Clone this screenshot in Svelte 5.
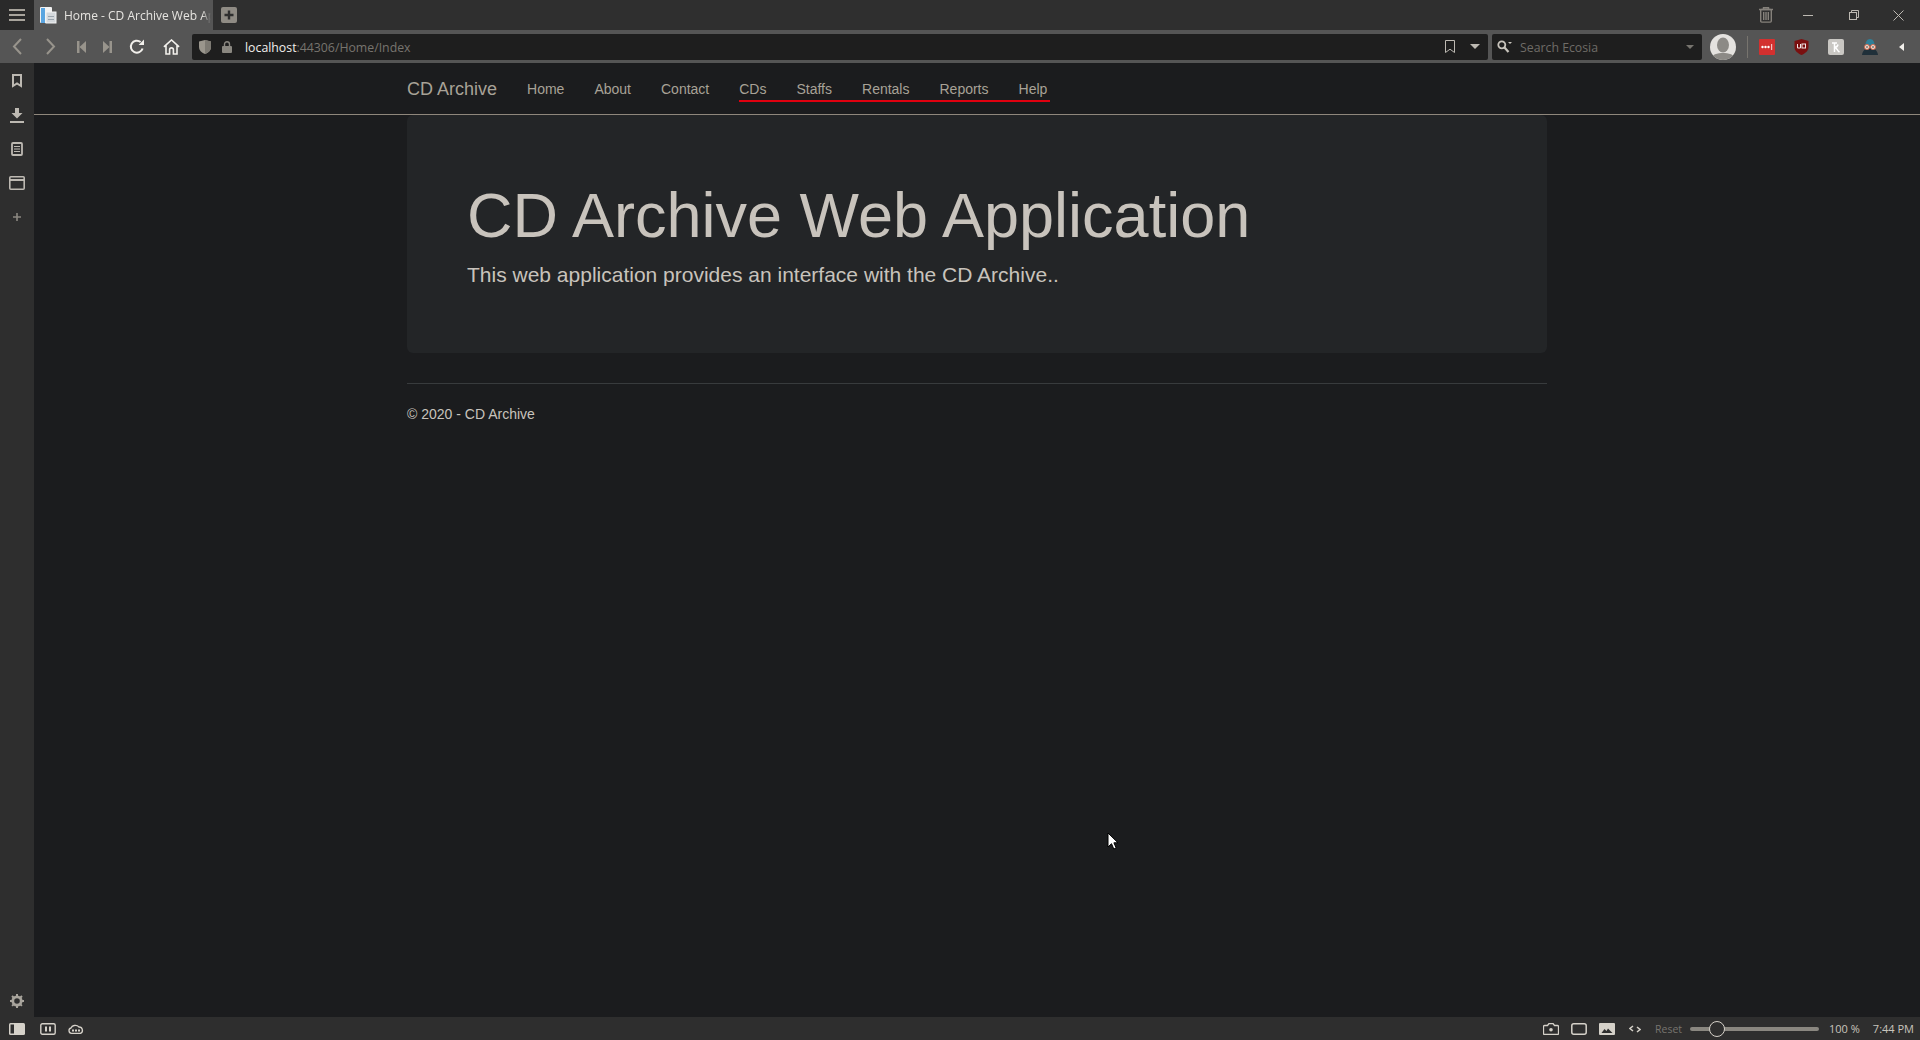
<script lang="ts">
    const navLinks = ["Home", "About", "Contact"];
    const markedLinks = ["CDs", "Staffs", "Rentals", "Reports", "Help"];
</script>

<div class="browser">
    <header class="tabbar">
        <button class="menu-btn" aria-label="Menu">
            <svg width="16" height="12" viewBox="0 0 16 12" fill="#a8a49c">
                <rect y="0" width="16" height="2" />
                <rect y="5" width="16" height="2" />
                <rect y="10" width="16" height="2" />
            </svg>
        </button>
        <div class="tab">
            <svg class="favicon" width="18" height="18" viewBox="0 0 18 18">
                <rect x="1" y="1" width="12" height="16" rx="1" fill="#f2f2f2" />
                <rect x="2" y="2" width="4" height="15" fill="#5aa5e0" />
                <rect x="7" y="6" width="10" height="11" fill="#d4d8dc" stroke="#f4f4f4" />
                <rect x="9" y="10" width="6" height="1" fill="#9aa4ad" />
                <rect x="9" y="13" width="6" height="1" fill="#9aa4ad" />
            </svg>
            <span class="tab-title">Home - CD Archive Web Application</span>
        </div>
        <button class="newtab" aria-label="New tab">
            <svg width="16" height="16" viewBox="0 0 16 16">
                <rect width="16" height="16" rx="2" fill="#8f8b84" />
                <path d="M8 3.5v9M3.500 8h9" stroke="#2e2e2e" stroke-width="2.400" />
            </svg>
        </button>
        <div class="window-controls">
            <svg width="14" height="16" viewBox="0 0 14 16" fill="none" stroke="#85817b" stroke-width="1.400">
                <path d="M0 2.500h14M4.500 2.500V.8h5v1.700" />
                <rect x="1.700" y="2.500" width="10.600" height="12.600" rx="1" />
                <path d="M4.700 5v8M7 5v8M9.300 5v8" />
            </svg>
            <svg class="c-min" width="10" height="10" viewBox="0 0 10 10"><path d="M0 5.500h10" stroke="#bdb9b2" /></svg>
            <svg class="c-max" width="10" height="10" viewBox="0 0 10 10" fill="none" stroke="#bdb9b2">
                <rect x=".5" y="2.500" width="7" height="7" />
                <path d="M2.500 2.500v-2h7v7h-2" />
            </svg>
            <svg class="c-close" width="11" height="11" viewBox="0 0 11 11"><path d="M.5.500l10 10M10.500.500l-10 10" stroke="#bdb9b2" /></svg>
        </div>
    </header>

    <div class="toolbar">
        <div class="nav-btns">
            <span class="btn w34">
                <svg width="10" height="17" viewBox="0 0 10 17" fill="none" stroke="#98948c" stroke-width="2"><path d="M9 1 2 8.500l7 7.500" /></svg>
            </span>
            <span class="btn w34">
                <svg width="10" height="17" viewBox="0 0 10 17" fill="none" stroke="#98948c" stroke-width="2"><path d="m1 1 7 7.500L1 16" /></svg>
            </span>
            <span class="btn w26">
                <svg width="9" height="12" viewBox="0 0 9 12" fill="#98948c"><rect width="2.500" height="12" /><path d="M9 0v12L2.500 6z" /></svg>
            </span>
            <span class="btn w26">
                <svg width="9" height="12" viewBox="0 0 9 12" fill="#98948c"><rect x="6.500" width="2.500" height="12" /><path d="M0 0v12l6.500-6z" /></svg>
            </span>
            <span class="btn w33">
                <svg width="16" height="16" viewBox="0 0 16 16" fill="none" stroke="#f2f0ec" stroke-width="2"><path d="M13.600 9.500A6 6 0 1 1 11.600 3" /><path d="M15 .5V6H9.600z" fill="#f2f0ec" stroke="none" /></svg>
            </span>
            <span class="btn w36">
                <svg width="17" height="16" viewBox="0 0 17 16" fill="none" stroke="#f2f0ec" stroke-width="1.600"><path d="M.9 7.800 8.500 1l7.600 6.800M3 6.200V15h3.600v-4.200a1.900 1.900 0 0 1 3.800 0V15H14V6.200" /></svg>
            </span>
        </div>

        <div class="urlbar">
            <svg width="12" height="14" viewBox="0 0 12 14"><path d="M6 0 0 1.500V7c0 3.500 3 6 6 7 3-1 6-3.500 6-7V1.500z" fill="#9a968d" /><path d="M6 0v14c3-1 6-3.500 6-7V1.500z" fill="#7d7a73" /></svg>
            <svg class="lock" width="10" height="12" viewBox="0 0 10 12"><rect y="5" width="10" height="7" rx="1" fill="#8a8780" /><path d="M2.500 5.500V3.200a2.500 2.500 0 0 1 5 0v2.300" fill="none" stroke="#8a8780" stroke-width="1.400" /></svg>
            <span class="url"><b>localhost</b>:44306/Home/Index</span>
            <svg class="bookmark" width="10" height="13" viewBox="0 0 10 13" fill="none" stroke="#bdb9b2"><path d="M.5.500h9v12L5 9.200.5 12.500z" /></svg>
            <svg class="caret" width="10" height="5" viewBox="0 0 10 5" fill="#bdb9b2"><path d="M0 0h10L5 5z" /></svg>
        </div>

        <div class="searchbar">
            <svg width="15" height="13" viewBox="0 0 15 13" fill="none"><circle cx="4.800" cy="4.800" r="3.500" stroke="#c8c4bc" stroke-width="1.800" /><path d="m7.500 7.500 4 4.500" stroke="#c8c4bc" stroke-width="2.200" /><path d="M11 2h4l-2 2z" fill="#c8c4bc" /></svg>
            <span class="search-text">Search Ecosia</span>
            <svg class="search-caret" width="8" height="4" viewBox="0 0 8 4" fill="#77746e"><path d="M0 0h8L4 4z" /></svg>
        </div>

        <div class="extensions">
            <svg class="avatar" width="26" height="26" viewBox="0 0 26 26">
                <defs><clipPath id="av"><circle cx="13" cy="13" r="13" /></clipPath></defs>
                <g clip-path="url(#av)">
                    <rect width="26" height="26" fill="#e4e2df" />
                    <ellipse cx="13" cy="11" rx="6" ry="7.500" fill="#8c8a86" />
                    <path d="M0 26c1-6 8-7 13-7s12 1 13 7z" fill="#8c8a86" />
                </g>
            </svg>
            <span class="sep"></span>
            <svg class="e1" width="16" height="16" viewBox="0 0 16 16">
                <rect width="16" height="16" rx="1" fill="#d3302f" />
                <circle cx="3.500" cy="8" r="1.200" fill="#fff" /><circle cx="6.500" cy="8" r="1.200" fill="#fff" /><circle cx="9.500" cy="8" r="1.200" fill="#fff" />
                <rect x="12" y="5" width="1.200" height="6" fill="#f0c0c0" />
            </svg>
            <svg class="e2" width="15" height="16" viewBox="0 0 15 16">
                <path d="M7.500 0 .5 2v6c0 4 3.500 6.500 7 8 3.500-1.500 7-4 7-8V2z" fill="#7a1010" />
                <path d="M3.500 5v4h3V5" fill="none" stroke="#f1e6e6" stroke-width="1" />
                <rect x="8" y="5" width="3.500" height="4" fill="none" stroke="#f1e6e6" stroke-width="1" />
            </svg>
            <svg class="e3" width="16" height="16" viewBox="0 0 16 16">
                <rect width="16" height="16" rx="2" fill="#c9c7c3" />
                <path d="M4 4h5M6.500 4v9M6.500 8.500c2 0 3-1 3.500-3M6.500 8.500c2.500 0 2.500 3 5 4.500" fill="none" stroke="#fff" stroke-width="1.500" />
            </svg>
            <svg class="e4" width="18" height="16" viewBox="0 0 18 16">
                <path d="M9 0c3 0 4.500 3 4.500 6h-9C4.500 3 6 0 9 0z" fill="#2f7f98" />
                <path d="M1 16c.5-4 3-7 8-7s7.500 3 8 7z" fill="#20303a" />
                <circle cx="6" cy="8" r="2.500" fill="#f0e4d8" stroke="#d2664c" /><circle cx="12" cy="8" r="2.500" fill="#f0e4d8" stroke="#d2664c" />
                <circle cx="6" cy="8" r=".8" fill="#20303a" /><circle cx="12" cy="8" r=".8" fill="#20303a" />
            </svg>
            <svg class="e5" width="5" height="8" viewBox="0 0 5 8" fill="#f2f0ec"><path d="M5 0v8L0 4z" /></svg>
        </div>
    </div>

    <div class="middle">
        <aside class="sidebar">
            <span class="side-item"><svg width="10" height="14" viewBox="0 0 10 14" fill="none" stroke="#bdb9b2" stroke-width="2"><path d="M1 1h8v11L5 9.500 1 12z" /></svg></span>
            <span class="side-item"><svg width="14" height="15" viewBox="0 0 14 15" fill="#bdb9b2"><path d="M5 0h4v5h3.500L7 10.500 1.500 5H5z" /><rect y="13" width="14" height="2" /></svg></span>
            <span class="side-item"><svg width="12" height="14" viewBox="0 0 12 14" fill="none" stroke="#bdb9b2" stroke-width="1.800"><rect x="1" y="1" width="10" height="12" rx="1" /><path d="M3 4.500h6M3 7h6M3 9.500h6" stroke-width="1" /></svg></span>
            <span class="side-item"><svg width="16" height="14" viewBox="0 0 16 14" fill="none" stroke="#bdb9b2" stroke-width="1.600"><rect x=".8" y=".8" width="14.400" height="12.400" rx="1" /><path d="M.8 4h14.400" stroke-width="2" /></svg></span>
            <span class="side-item"><svg width="8" height="8" viewBox="0 0 8 8" stroke="#8a8780" stroke-width="1.600"><path d="M4 0v8M0 4h8" /></svg></span>
            <svg class="gear" width="14" height="14" viewBox="0 0 14 14">
                <circle cx="7" cy="7" r="4.200" fill="none" stroke="#a8a49c" stroke-width="2.800" />
                <path d="M7 0v14M0 7h14M2 2l10 10M12 2 2 12" stroke="#a8a49c" stroke-width="2" stroke-dasharray="2.500 9" />
            </svg>
        </aside>

        <main class="page">
            <nav class="navbar">
                <div class="container nav-inner">
                    <a class="brand" href="#top">CD Archive</a>
                    <ul class="nav-list">
                        {#each navLinks as link}
                            <li><a href="#top">{link}</a></li>
                        {/each}
                    </ul>
                    <ul class="nav-list marked">
                        {#each markedLinks as link}
                            <li><a href="#top">{link}</a></li>
                        {/each}
                    </ul>
                </div>
            </nav>

            <div class="container">
                <section class="jumbotron">
                    <h1>CD Archive Web Application</h1>
                    <p>This web application provides an interface with the CD Archive..</p>
                </section>
                <hr />
                <footer>© 2020 - CD Archive</footer>
            </div>

            <svg class="cursor" width="12" height="19" viewBox="0 0 12 19">
                <path d="M1 1v14l3.500-3.300 2.300 5.300 2.400-1-2.300-5.200H11z" fill="#fff" stroke="#000" />
            </svg>
        </main>
    </div>

    <footer class="statusbar">
        <div class="status-left">
            <svg width="16" height="12" viewBox="0 0 16 12"><rect width="16" height="12" rx="1.500" fill="#d5d1c9" /><rect x="1.500" y="1.500" width="3.500" height="9" fill="#2e2e2e" /></svg>
            <svg class="s-pause" width="16" height="12" viewBox="0 0 16 12" fill="none"><rect x=".8" y=".8" width="14.400" height="10.400" rx="1.500" stroke="#d5d1c9" stroke-width="1.400" /><path d="M6 3.500v5M10 3.500v5" stroke="#d5d1c9" stroke-width="2" /></svg>
            <svg class="s-cloud" width="16" height="11" viewBox="0 0 16 11"><path d="M3.500 10.300a2.700 2.700 0 0 1-.5-5.300 4 4 0 0 1 3-2.500 5 5 0 0 1 5 1.500 3.300 3.300 0 0 1 1.500 6.300z" fill="none" stroke="#d5d1c9" stroke-width="1.300" /><path d="M4 7.500h8" stroke="#d5d1c9" stroke-width="2" stroke-dasharray="2 1" /></svg>
        </div>
        <div class="status-right">
            <svg width="16" height="12" viewBox="0 0 16 12"><path d="M1.500 2.500h3L6 .5h4l1.500 2h3a1 1 0 0 1 1 1v7a1 1 0 0 1-1 1h-13a1 1 0 0 1-1-1v-7a1 1 0 0 1 1-1z" fill="none" stroke="#d5d1c9" stroke-width="1.300" /><circle cx="8" cy="6.800" r="1.800" fill="#d5d1c9" /></svg>
            <svg class="s-rect" width="16" height="12" viewBox="0 0 16 12" fill="none"><rect x=".8" y=".8" width="14.400" height="10.400" rx="2" stroke="#d5d1c9" stroke-width="1.500" /></svg>
            <svg class="s-img" width="16" height="12" viewBox="0 0 16 12"><rect width="16" height="12" rx="1" fill="#d5d1c9" /><path d="m2.500 10 3-4 2 2 1.500-2.500L13.500 10z" fill="#2e2e2e" /></svg>
            <svg class="s-code" width="12" height="8" viewBox="0 0 12 8" fill="none" stroke="#d5d1c9" stroke-width="1.500"><path d="M4 1 1 3.500 4 6M8 2l3 2.500L8 7" /></svg>
            <span class="reset">Reset</span>
            <div class="slider"><span class="knob"></span></div>
            <span class="zoom-level">100 %</span>
            <span class="clock">7:44 PM</span>
        </div>
    </footer>
</div>

<style>
    :global(body) {
        margin: 0;
        background: #1b1c1e;
    }

    .browser {
        width: 1920px;
        height: 1040px;
        display: flex;
        flex-direction: column;
        overflow: hidden;
        font-family: "Open Sans", "Noto Sans", sans-serif;
    }

    .tabbar {
        height: 30px;
        flex: none;
        display: flex;
        align-items: stretch;
        background: #2f2f2f;
    }

    .menu-btn {
        width: 34px;
        padding: 0;
        border: 0;
        background: #2a2a2a;
        display: flex;
        align-items: center;
        justify-content: center;
    }

    .tab {
        width: 179px;
        box-sizing: border-box;
        padding-right: 2px;
        display: flex;
        align-items: center;
        background: #555555;
        white-space: nowrap;
    }

    .favicon {
        margin-left: 5px;
        flex: none;
    }

    .tab-title {
        margin-left: 7px;
        font-size: 12px;
        color: #e6e4e0;
        overflow: hidden;
        mask-image: linear-gradient(to right, #000 94%, transparent);
    }

    .newtab {
        margin-left: 8px;
        padding: 0;
        border: 0;
        background: none;
        display: flex;
        align-items: center;
    }

    .window-controls {
        margin-left: auto;
        margin-right: 16px;
        display: flex;
        align-items: center;
    }

    .c-min {
        margin-left: 30px;
    }

    .c-max {
        margin-left: 36px;
    }

    .c-close {
        margin-left: 34px;
    }

    .toolbar {
        height: 33px;
        flex: none;
        display: flex;
        align-items: center;
        background: #555555;
    }

    .nav-btns {
        display: flex;
        width: 192px;
        flex: none;
    }

    .btn {
        display: flex;
        align-items: center;
        justify-content: center;
        height: 33px;
    }

    .w34 {
        width: 34px;
    }

    .w26 {
        width: 26px;
    }

    .w33 {
        width: 33px;
    }

    .w36 {
        width: 36px;
    }

    .urlbar {
        width: 1296px;
        height: 26px;
        box-sizing: border-box;
        flex: none;
        display: flex;
        align-items: center;
        padding-left: 7px;
        background: #1e1e1e;
        border-radius: 2px;
    }

    .lock {
        margin-left: 11px;
    }

    .url {
        margin-left: 13px;
        padding-top: 2px;
        font-size: 12.3px;
        color: #77746e;
    }

    .url b {
        font-weight: 400;
        color: #f2f0ec;
    }

    .bookmark {
        margin-left: auto;
    }

    .caret {
        margin-left: 15px;
        margin-right: 8px;
    }

    .searchbar {
        margin-left: 4px;
        width: 210px;
        height: 26px;
        box-sizing: border-box;
        flex: none;
        display: flex;
        align-items: center;
        padding: 0 8px 0 5px;
        background: #1e1e1e;
        border-radius: 2px;
    }

    .search-text {
        margin-left: 8px;
        padding-top: 2px;
        font-size: 12.3px;
        color: #6f6c67;
    }

    .search-caret {
        margin-left: auto;
    }

    .extensions {
        flex: 1;
        display: flex;
        align-items: center;
    }

    .avatar {
        margin-left: 8px;
    }

    .sep {
        width: 1px;
        height: 22px;
        margin-left: 11px;
        background: #77746e;
    }

    .e1 {
        margin-left: 11px;
    }

    .e2 {
        margin-left: 19px;
    }

    .e3 {
        margin-left: 19px;
    }

    .e4 {
        margin-left: 17px;
    }

    .e5 {
        margin-left: 20px;
    }

    .middle {
        flex: 1;
        min-height: 0;
        display: flex;
    }

    .sidebar {
        width: 34px;
        flex: none;
        background: #2e2e2e;
        display: flex;
        flex-direction: column;
        align-items: center;
        padding-top: 1px;
        box-sizing: border-box;
    }

    .side-item {
        height: 34px;
        display: flex;
        align-items: center;
    }

    .gear {
        margin-top: auto;
        margin-bottom: 9px;
    }

    .page {
        flex: 1;
        position: relative;
        background: #1b1c1e;
        font-family: "Liberation Sans", Arial, sans-serif;
        color: #c8c3bc;
    }

    .container {
        width: 1140px;
        margin: 0 auto;
    }

    .navbar {
        height: 52px;
        box-sizing: border-box;
        border-bottom: 1px solid #8f877c;
    }

    .nav-inner {
        display: flex;
        height: 51px;
        align-items: center;
    }

    .brand {
        padding-top: 1px;
        font-size: 18px;
        color: #a8a297;
        text-decoration: none;
        margin-right: 15px;
    }

    .nav-list {
        display: flex;
        list-style: none;
        margin: 0;
        padding: 0;
    }

    .nav-list a {
        display: block;
        padding: 0 15px;
        font-size: 14px;
        line-height: 20px;
        color: #a8a297;
        text-decoration: none;
    }

    .marked {
        position: relative;
    }

    .marked::after {
        content: "";
        position: absolute;
        left: 15px;
        right: 12px;
        top: 21.5px;
        height: 2px;
        background: #e0000f;
    }

    .jumbotron {
        height: 238px;
        box-sizing: border-box;
        padding: 66px 60px 0;
        background: #232527;
        border-radius: 6px;
        margin-bottom: 30px;
    }

    h1 {
        margin: 0 0 10px;
        font-size: 63px;
        font-weight: 500;
        line-height: 69px;
        color: #c8c3bc;
    }

    .jumbotron p {
        margin: 0;
        font-size: 21px;
        line-height: 30px;
        color: #c8c3bc;
    }

    hr {
        margin: 0 0 20px;
        border: 0;
        border-top: 1px solid #383b3d;
    }

    footer:not(.statusbar) {
        font-size: 14px;
        line-height: 20px;
        color: #c8c3bc;
    }

    .cursor {
        position: absolute;
        left: 1073px;
        top: 769px;
    }

    .statusbar {
        height: 23px;
        flex: none;
        display: flex;
        align-items: center;
        background: #2e2e2e;
    }

    .status-left {
        display: flex;
        align-items: center;
        padding-left: 9px;
    }

    .s-pause {
        margin-left: 15px;
    }

    .s-cloud {
        margin-left: 12px;
    }

    .status-right {
        margin-left: auto;
        display: flex;
        align-items: center;
    }

    .s-rect,
    .s-img {
        margin-left: 12px;
    }

    .s-code {
        margin-left: 14px;
    }

    .reset {
        margin-left: 14px;
        font-size: 10.5px;
        color: #77746e;
    }

    .slider {
        position: relative;
        margin-left: 8px;
        width: 129px;
        height: 4px;
        border-radius: 2px;
        background: #8a8780;
    }

    .knob {
        position: absolute;
        left: 19px;
        top: -6px;
        width: 14px;
        height: 14px;
        border: 1px solid #d5d1c9;
        border-radius: 50%;
        background: #2e2e2e;
    }

    .zoom-level {
        margin-left: 10px;
        font-size: 11px;
        color: #c8c4bc;
    }

    .clock {
        margin-left: 13px;
        margin-right: 6px;
        font-size: 11px;
        color: #c8c4bc;
    }
</style>
